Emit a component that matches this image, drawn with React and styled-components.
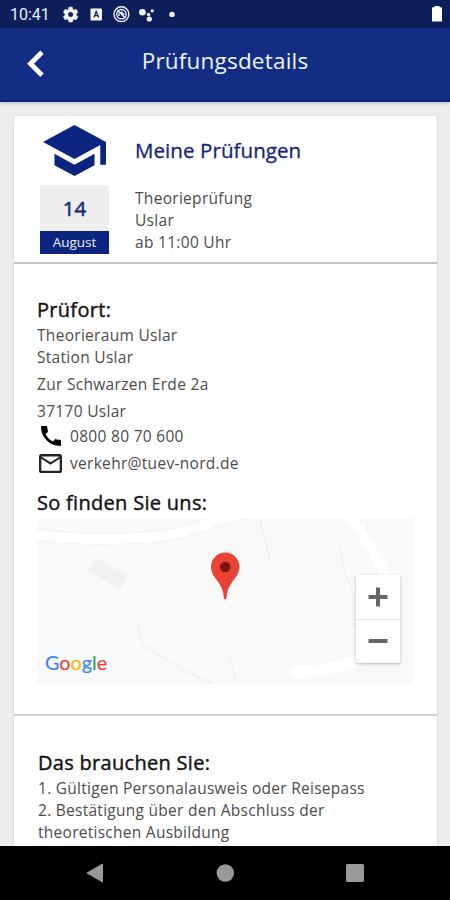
import styled, { createGlobalStyle } from "styled-components";

const colors = {
  primary: "#132d85",
  primaryDark: "#0d1f5b",
  navy: "#0b2480",
  background: "#ededed",
  text: "#4c4c4c",
};

const GlobalStyle = createGlobalStyle`
  * {
    box-sizing: border-box;
  }

  body {
    margin: 0;
    background: ${colors.background};
    font-family: "Open Sans", "Noto Sans", sans-serif;
  }

  svg {
    display: block;
    flex-shrink: 0;
  }
`;

const requirements = [
  "1. Gültigen Personalausweis oder Reisepass",
  "2. Bestätigung über den Abschluss der",
  "theoretischen Ausbildung",
];

const StatusIcons = () => (
  <svg width="116" height="28" viewBox="62 0 116 28" fill="#f4f5fb">
    <path
      transform="translate(61.4 5.3) scale(.77)"
      stroke="#f4f5fb"
      strokeWidth="0.8"
      d="M19.14 12.94c.04-.3.06-.61.06-.94 0-.32-.02-.64-.07-.94l2.03-1.58c.18-.14.23-.41.12-.61l-1.92-3.32c-.12-.22-.37-.29-.59-.22l-2.39.96c-.5-.38-1.03-.7-1.62-.94l-.36-2.54c-.04-.24-.24-.41-.48-.41h-3.84c-.24 0-.43.17-.47.41l-.36 2.54c-.59.24-1.13.57-1.62.94l-2.39-.96c-.22-.08-.47 0-.59.22L2.74 8.87c-.12.21-.08.47.12.61l2.03 1.58c-.05.3-.09.63-.09.94s.02.64.07.94l-2.03 1.58c-.18.14-.23.41-.12.61l1.92 3.32c.12.22.37.29.59.22l2.39-.96c.5.38 1.03.7 1.62.94l.36 2.54c.05.24.24.41.48.41h3.84c.24 0 .44-.17.47-.41l.36-2.54c.59-.24 1.13-.56 1.62-.94l2.39.96c.22.08.47 0 .59-.22l1.92-3.32c.12-.22.07-.47-.12-.61l-2.01-1.58zM12 15.6c-1.98 0-3.6-1.62-3.6-3.6s1.62-3.6 3.6-3.6 3.6 1.62 3.6 3.6-1.62 3.6-3.6 3.6z"
    />
    <rect x="90.5" y="8.5" width="11.5" height="12" rx="1" />
    <path
      d="M93.9 17.5 96.2 11.5 98.6 17.5M94.8 15.6h3"
      fill="none"
      stroke={colors.primaryDark}
      strokeWidth="1.2"
    />
    <g fill="none" stroke="#f4f5fb">
      <circle cx="121.4" cy="14.2" r="7.4" strokeWidth="1.4" />
      <circle cx="121.4" cy="14.2" r="4.7" strokeWidth="1.4" />
      <path d="m117.5 10.3 8 8M121 11.5l3.3 3.3M119 13.5v2.5" strokeWidth="1.4" />
    </g>
    <circle cx="142.4" cy="12.2" r="3.3" />
    <circle cx="148.6" cy="14.6" r="1.8" />
    <circle cx="149.3" cy="19" r="2.6" />
    <circle cx="152.2" cy="10.8" r="1.6" />
    <circle cx="172" cy="14.4" r="2.7" />
  </svg>
);

const MapDrawing = () => (
  <svg width="376" height="166" viewBox="0 0 376 166">
    <rect width="376" height="166" fill="#f8f9fa" />
    <path
      d="M140 23 170 12 223 4 233 42 303 28 316 75V103L235 121 190 137 176 166 158 158 120 136 106 127 100 104 112 75 118 28Z"
      fill="#f9f9f9"
    />
    <path
      d="M-4 16 C38 23 104 22 138 16 C170 8 190 -4 226 -6"
      fill="none"
      stroke="#efefef"
      strokeWidth="11.5"
    />
    <path
      d="M-4 16 C38 23 104 22 138 16 C170 8 190 -4 226 -6"
      fill="none"
      stroke="#fff"
      strokeWidth="10"
    />
    <path d="M306 -6 Q326 8 350 62" fill="none" stroke="#fff" strokeWidth="10" />
    <path
      d="M257 154 Q282 155 328 141"
      fill="none"
      stroke="#fff"
      strokeWidth="11"
      strokeLinecap="round"
    />
    <path d="m59 40 32 17-8 15-32-19Z" fill="#f1f2f3" />
    <g fill="none" stroke="#ececec" strokeWidth="1">
      <path d="M100 104 106 127 120 136 158 158 176 166" />
      <path d="M223 2 233 42" />
      <path d="M303 28 307 51 316 75V110" />
      <path d="m192 137 7 25" />
    </g>
  </svg>
);

const App = () => {
  return (
    <Screen>
      <GlobalStyle />
      <StatusBar>
        <Clock>10:41</Clock>
        <StatusIcons />
        <Battery width="10" height="16" viewBox="0 0 10 16">
          <path d="M2.5 1.3V0h5v1.3H9q1 0 1 1V15.5H0V2.3q0-1 1-1Z" fill="#fff" />
        </Battery>
      </StatusBar>
      <Header>
        <BackButton aria-label="Zurück">
          <svg width="18" height="28" viewBox="0 0 18 28">
            <path d="M16 2.2 4.5 13.7 16 25.2" fill="none" stroke="#fff" strokeWidth="4.8" />
          </svg>
        </BackButton>
        <Title>Prüfungsdetails</Title>
      </Header>

      <Card>
        <Summary>
          <svg width="63" height="51" viewBox="1 3 22 18" preserveAspectRatio="none">
            <path
              fill={colors.navy}
              d="M5 13.18v4L12 21l7-3.82v-4L12 17l-7-3.82zM12 3 1 9l11 6 9-4.91V17h2V9L12 3z"
            />
          </svg>
          <SummaryTitle>Meine Prüfungen</SummaryTitle>
          <DateBox>
            <Day>14</Day>
            <Month>August</Month>
          </DateBox>
          <SummaryText>
            <Line $height={22}>Theorieprüfung</Line>
            <Line $height={22}>Uslar</Line>
            <Line $height={22}>ab 11:00 Uhr</Line>
          </SummaryText>
        </Summary>

        <Location>
          <Heading>Prüfort:</Heading>
          <Line $height={22}>Theorieraum Uslar</Line>
          <Line $height={22}>Station Uslar</Line>
          <Line $height={32}>Zur Schwarzen Erde 2a</Line>
          <Line $height={22}>37170 Uslar</Line>
          <Contact>
            <svg width="20" height="20" viewBox="3 3 18 18">
              <path d="M20.01 15.38c-1.23 0-2.42-.2-3.53-.56-.35-.12-.74-.03-1.01.24l-1.57 1.97c-2.83-1.35-5.48-3.9-6.89-6.83l1.95-1.66c.27-.28.35-.67.24-1.02-.37-1.11-.56-2.3-.56-3.53 0-.54-.45-.99-.99-.99H4.19C3.65 3 3 3.24 3 3.99 3 13.28 10.73 21 20.01 21c.71 0 .99-.63.99-1.18v-3.45c0-.54-.45-.99-.99-.99z" />
            </svg>
            <Line $height={28}>0800 80 70 600</Line>
          </Contact>
          <Contact>
            <svg width="23" height="19" viewBox="2 4 20 16" preserveAspectRatio="none">
              <path
                fill="#222"
                d="M22 6c0-1.1-.9-2-2-2H4c-1.1 0-2 .9-2 2v12c0 1.1.9 2 2 2h16c1.1 0 2-.9 2-2V6zm-2 0-8 5-8-5h16zm0 12H4V8l8 5 8-5v10z"
              />
            </svg>
            <Line $height={27}>verkehr@tuev-nord.de</Line>
          </Contact>
          <Heading $top={12}>So finden Sie uns:</Heading>
          <Map>
            <MapDrawing />
            <Pin width="30" height="48" viewBox="0 0 30 48">
              <path
                d="M15.2 .5A14.2 14.2 0 0 0 1 14.7C1 20 3.2 23.3 6.7 28c3.6 4.8 6.3 9 7.1 17q.1 2.5 1.4 2.5t1.4-2.5c.8-8 3.5-12.2 7.1-17 3.5-4.7 5.7-8 5.7-13.3A14.2 14.2 0 0 0 15.2 .5Z"
                fill="#ea4335"
              />
              <circle cx="15.2" cy="15" r="5.3" fill="#811411" />
            </Pin>
            <Google>
              <Letter $color="#4285f4">G</Letter>
              <Letter $color="#ea4335">o</Letter>
              <Letter $color="#fbbc05">o</Letter>
              <Letter $color="#4285f4">g</Letter>
              <Letter $color="#34a853">l</Letter>
              <Letter $color="#ea4335">e</Letter>
            </Google>
            <Zoom>
              <ZoomButton aria-label="Vergrößern">
                <svg width="20" height="20" viewBox="0 0 20 20">
                  <path d="M10 .5v19M.5 10h19" stroke="#666" strokeWidth="4" />
                </svg>
              </ZoomButton>
              <ZoomButton aria-label="Verkleinern">
                <svg width="20" height="20" viewBox="0 0 20 20">
                  <path d="M.5 9h19" stroke="#666" strokeWidth="4" />
                </svg>
              </ZoomButton>
            </Zoom>
          </Map>
        </Location>

        <Requirements>
          <Heading>Das brauchen Sie:</Heading>
          {requirements.map((text) => (
            <Line key={text} $height={22} $spacing={0.27}>
              {text}
            </Line>
          ))}
        </Requirements>
      </Card>

      <NavBar>
        <svg width="18" height="20" viewBox="0 0 18 20">
          <path d="M16.5 1v18L1 10Z" fill="#999" stroke="#999" strokeLinejoin="round" />
        </svg>
        <svg width="18" height="18" viewBox="0 0 18 18">
          <circle cx="9.3" cy="9" r="8.7" fill="#999" />
        </svg>
        <svg width="18" height="18" viewBox="0 0 18 18">
          <rect width="18" height="18" rx="1.5" fill="#999" />
        </svg>
      </NavBar>
    </Screen>
  );
};
export default App;

const Screen = styled.div`
  display: flex;
  flex-direction: column;
  width: 450px;
  height: 900px;
  overflow: hidden;
  background: ${colors.background};
`;

const StatusBar = styled.div`
  display: flex;
  align-items: center;
  flex-shrink: 0;
  height: 28px;
  padding: 0 8px 0 10px;
  background: ${colors.primaryDark};
`;

const Clock = styled.span`
  width: 52px;
  color: #e9ebf5;
  font-family: Roboto, sans-serif;
  font-size: 16px;
  line-height: 28px;
  padding-top: 1px;
`;

const Battery = styled.svg`
  margin-left: auto;
`;

const Header = styled.header`
  display: grid;
  grid-template-columns: 60px 1fr 60px;
  flex-shrink: 0;
  height: 74px;
  background: ${colors.primary};
  border-bottom: 2px solid #08227c;
  box-shadow: 0 1px 4px rgba(0, 0, 0, 0.25);
`;

const BackButton = styled.button`
  display: flex;
  padding: 22px 0 0 26px;
  border: 0;
  background: none;
`;

const Title = styled.h1`
  margin: 0;
  color: #f1f3fb;
  font-size: 22.5px;
  font-weight: 400;
  letter-spacing: 0.2px;
  line-height: 66px;
  text-align: center;
`;

const Card = styled.main`
  flex: 1;
  min-height: 0;
  margin: 14px 13px 0 14px;
  overflow: hidden;
  border-radius: 3px 3px 0 0;
  background: #fff;
  box-shadow: 0 1px 2px rgba(0, 0, 0, 0.25);
`;

const Summary = styled.section`
  display: grid;
  grid-template-columns: 69px 1fr;
  grid-template-rows: 60px auto;
  column-gap: 26px;
  height: 148px;
  padding: 9px 26px 0;
  border-bottom: 2px solid #c4c4c4;

  > svg {
    justify-self: center;
  }
`;

const SummaryTitle = styled.h2`
  margin: 0;
  color: #14267c;
  font-size: 20.5px;
  font-weight: 400;
  letter-spacing: 0.08px;
  line-height: 51px;
  -webkit-text-stroke: 0.3px #14267c;
`;

const DateBox = styled.div`
  height: 69px;
  background: #eeeeee;
  text-align: center;
`;

const Day = styled.div`
  height: 46px;
  color: #142c7d;
  font-size: 20.5px;
  font-weight: 400;
  line-height: 46px;
  -webkit-text-stroke: 0.5px #142c7d;
`;

const Month = styled.div`
  height: 23px;
  background: ${colors.navy};
  color: #eef0fa;
  font-size: 13.5px;
  line-height: 23px;
`;

const SummaryText = styled.div`
  padding-top: 2px;
`;

const Line = styled.div`
  color: ${colors.text};
  font-size: 15.5px;
  letter-spacing: ${(props) => props.$spacing ?? 0.3}px;
  line-height: ${(props) => props.$height}px;
  white-space: nowrap;
`;

const Location = styled.section`
  height: 452px;
  padding: 32px 23px 0;
  border-bottom: 2px solid #d0d0d0;
`;

const Requirements = styled.section`
  padding: 33px 24px 0;
`;

const Heading = styled.h3`
  margin: ${(props) => props.$top ?? 0}px 0 0;
  color: #111;
  font-size: 20px;
  font-weight: 400;
  letter-spacing: 0.3px;
  line-height: 28px;
  -webkit-text-stroke: 0.4px #111;
`;

const Contact = styled.div`
  display: grid;
  grid-template-columns: 27px 1fr;
  align-items: center;
  justify-items: center;
  column-gap: 6px;

  > ${Line} {
    justify-self: start;
  }
`;

const Map = styled.div`
  position: relative;
  width: 376px;
  height: 166px;
  margin-top: 1px;
`;

const Pin = styled.svg`
  position: absolute;
  top: 34px;
  left: 173px;
`;

const Google = styled.div`
  position: absolute;
  bottom: 8px;
  left: 8px;
  font-family: Lato, sans-serif;
  font-size: 19.8px;
  line-height: 28px;
`;

const Letter = styled.span`
  color: ${(props) => props.$color};
  -webkit-text-stroke: 0.2px ${(props) => props.$color};
`;

const Zoom = styled.div`
  position: absolute;
  top: 57px;
  right: 13px;
  width: 44px;
  border-radius: 2px;
  background: #fff;
  box-shadow: 0 1px 3px rgba(0, 0, 0, 0.3);
`;

const ZoomButton = styled.button`
  display: flex;
  align-items: center;
  justify-content: center;
  width: 44px;
  height: 44px;
  padding: 0;
  border: 0;
  background: none;

  & + & {
    border-top: 1px solid #e6e6e6;
  }
`;

const NavBar = styled.nav`
  display: grid;
  grid-template-columns: repeat(3, 130px);
  justify-content: center;
  justify-items: center;
  align-items: center;
  flex-shrink: 0;
  height: 54px;
  background: #000;
`;
